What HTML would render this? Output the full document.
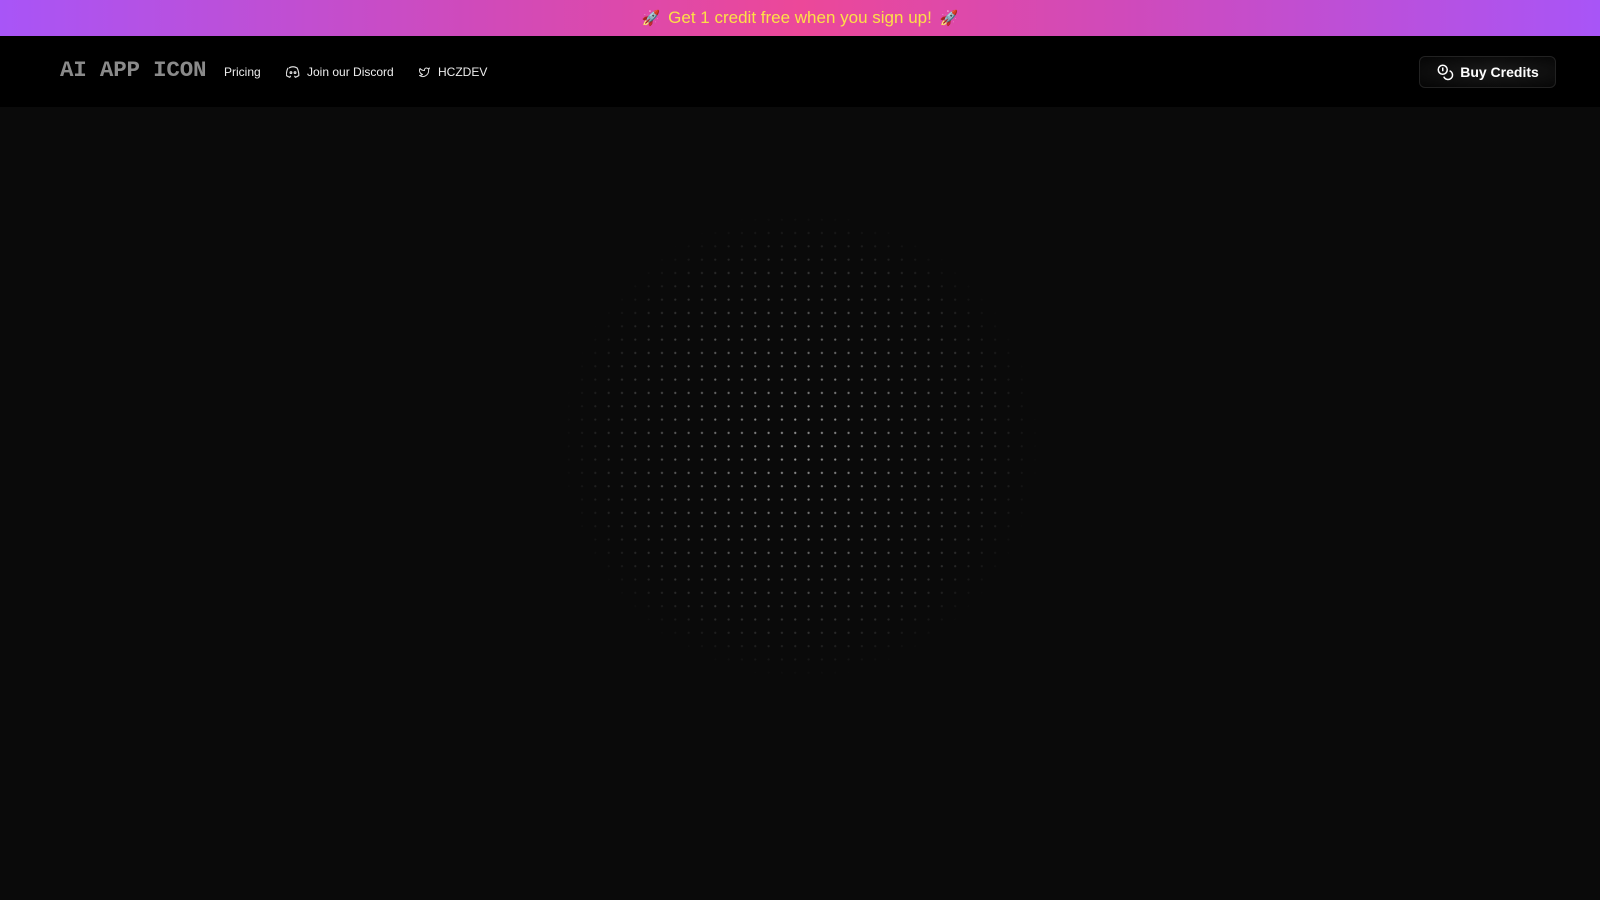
<!DOCTYPE html>
<html><head><meta charset="utf-8"><style>
*{margin:0;padding:0;box-sizing:border-box}
body{width:1600px;height:900px;background:#0a0a0a;font-family:"Liberation Sans",sans-serif;overflow:hidden;position:relative}
.banner{height:36px;background:linear-gradient(90deg,#a855f7 0%,#d04aba 30%,#ec4899 50%,#d04aba 70%,#a855f7 100%);display:flex;align-items:center;justify-content:center;color:#fde047;font-size:17px}
.banner .r{font-size:15px;margin:0 8px}
nav{height:71px;background:#000;position:relative;color:#fff;font-size:12px}
.logo{position:absolute;left:60px;top:21px;font-family:"Liberation Mono",monospace;font-weight:bold;font-size:22.5px;color:#8a8a8a;letter-spacing:-0.2px}
.l{position:absolute;top:29px;display:flex;align-items:center;gap:7px;color:#eee}
.btn{position:absolute;left:1419px;top:20px;width:137px;height:32px;border:1px solid #222;border-radius:6px;background:radial-gradient(ellipse at 55% 50%,#1a1a1a,#050505);display:flex;align-items:center;justify-content:center;gap:6px;font-weight:bold;font-size:14px;color:#fff}
.dots{position:absolute;left:560px;top:210px;width:480px;height:470px;background-image:radial-gradient(circle,#999 0.9px,transparent 1.3px);background-size:13.33px 13.33px;background-position:2px 3px;-webkit-mask-image:radial-gradient(ellipse 50% 50% at 50% 50%,#000 0%,rgba(0,0,0,.6) 50%,transparent 100%);mask-image:radial-gradient(ellipse 50% 50% at 50% 50%,#000 0%,rgba(0,0,0,.6) 50%,transparent 100%)}
</style></head><body>
<div class="banner"><span class="r">🚀</span>Get 1 credit free when you sign up!<span class="r">🚀</span></div>
<nav>
<div class="logo">AI APP ICON</div>
<div class="l" style="left:224px">Pricing</div>
<div class="l" style="left:286px"><svg width="14" height="12" viewBox="0 0 24 20" fill="none" stroke="#ddd" stroke-width="2"><path d="M5 3c3-1.5 5-2 7-2s4 .5 7 2c2 4 3 8 3 13-2 1.5-4 2.5-6 3l-1.5-2.5M19 3M8 16.5 6.5 19c-2-.5-4-1.5-6-3 0-5 1-9 3-13"/><circle cx="8.5" cy="11" r="1.5"/><circle cx="15.5" cy="11" r="1.5"/></svg>Join our Discord</div>
<div class="l" style="left:418px"><svg width="13" height="12" viewBox="0 0 24 24" fill="none" stroke="#ddd" stroke-width="2" stroke-linejoin="round"><path d="M22 4s-.7 2.1-2 3.4c1.6 10-9.4 17.3-18 11.6 2.2.1 4.4-.6 6-2C3 15.5.5 9.6 3 5c2.2 2.6 5.6 4.1 9 4-.9-4.2 4-6.6 7-3.8 1.1 0 3-1.2 3-1.2z"/></svg>HCZDEV</div>
<div class="btn"><svg width="18" height="18" viewBox="0 0 24 24" fill="none" stroke="#fff" stroke-width="2"><circle cx="9" cy="9" r="6"/><path d="M18.1 10.4a6 6 0 1 1-7.7 7.7"/><path d="M8 7h1v4"/></svg>Buy Credits</div>
</nav>
<div class="dots"></div>
</body></html>
